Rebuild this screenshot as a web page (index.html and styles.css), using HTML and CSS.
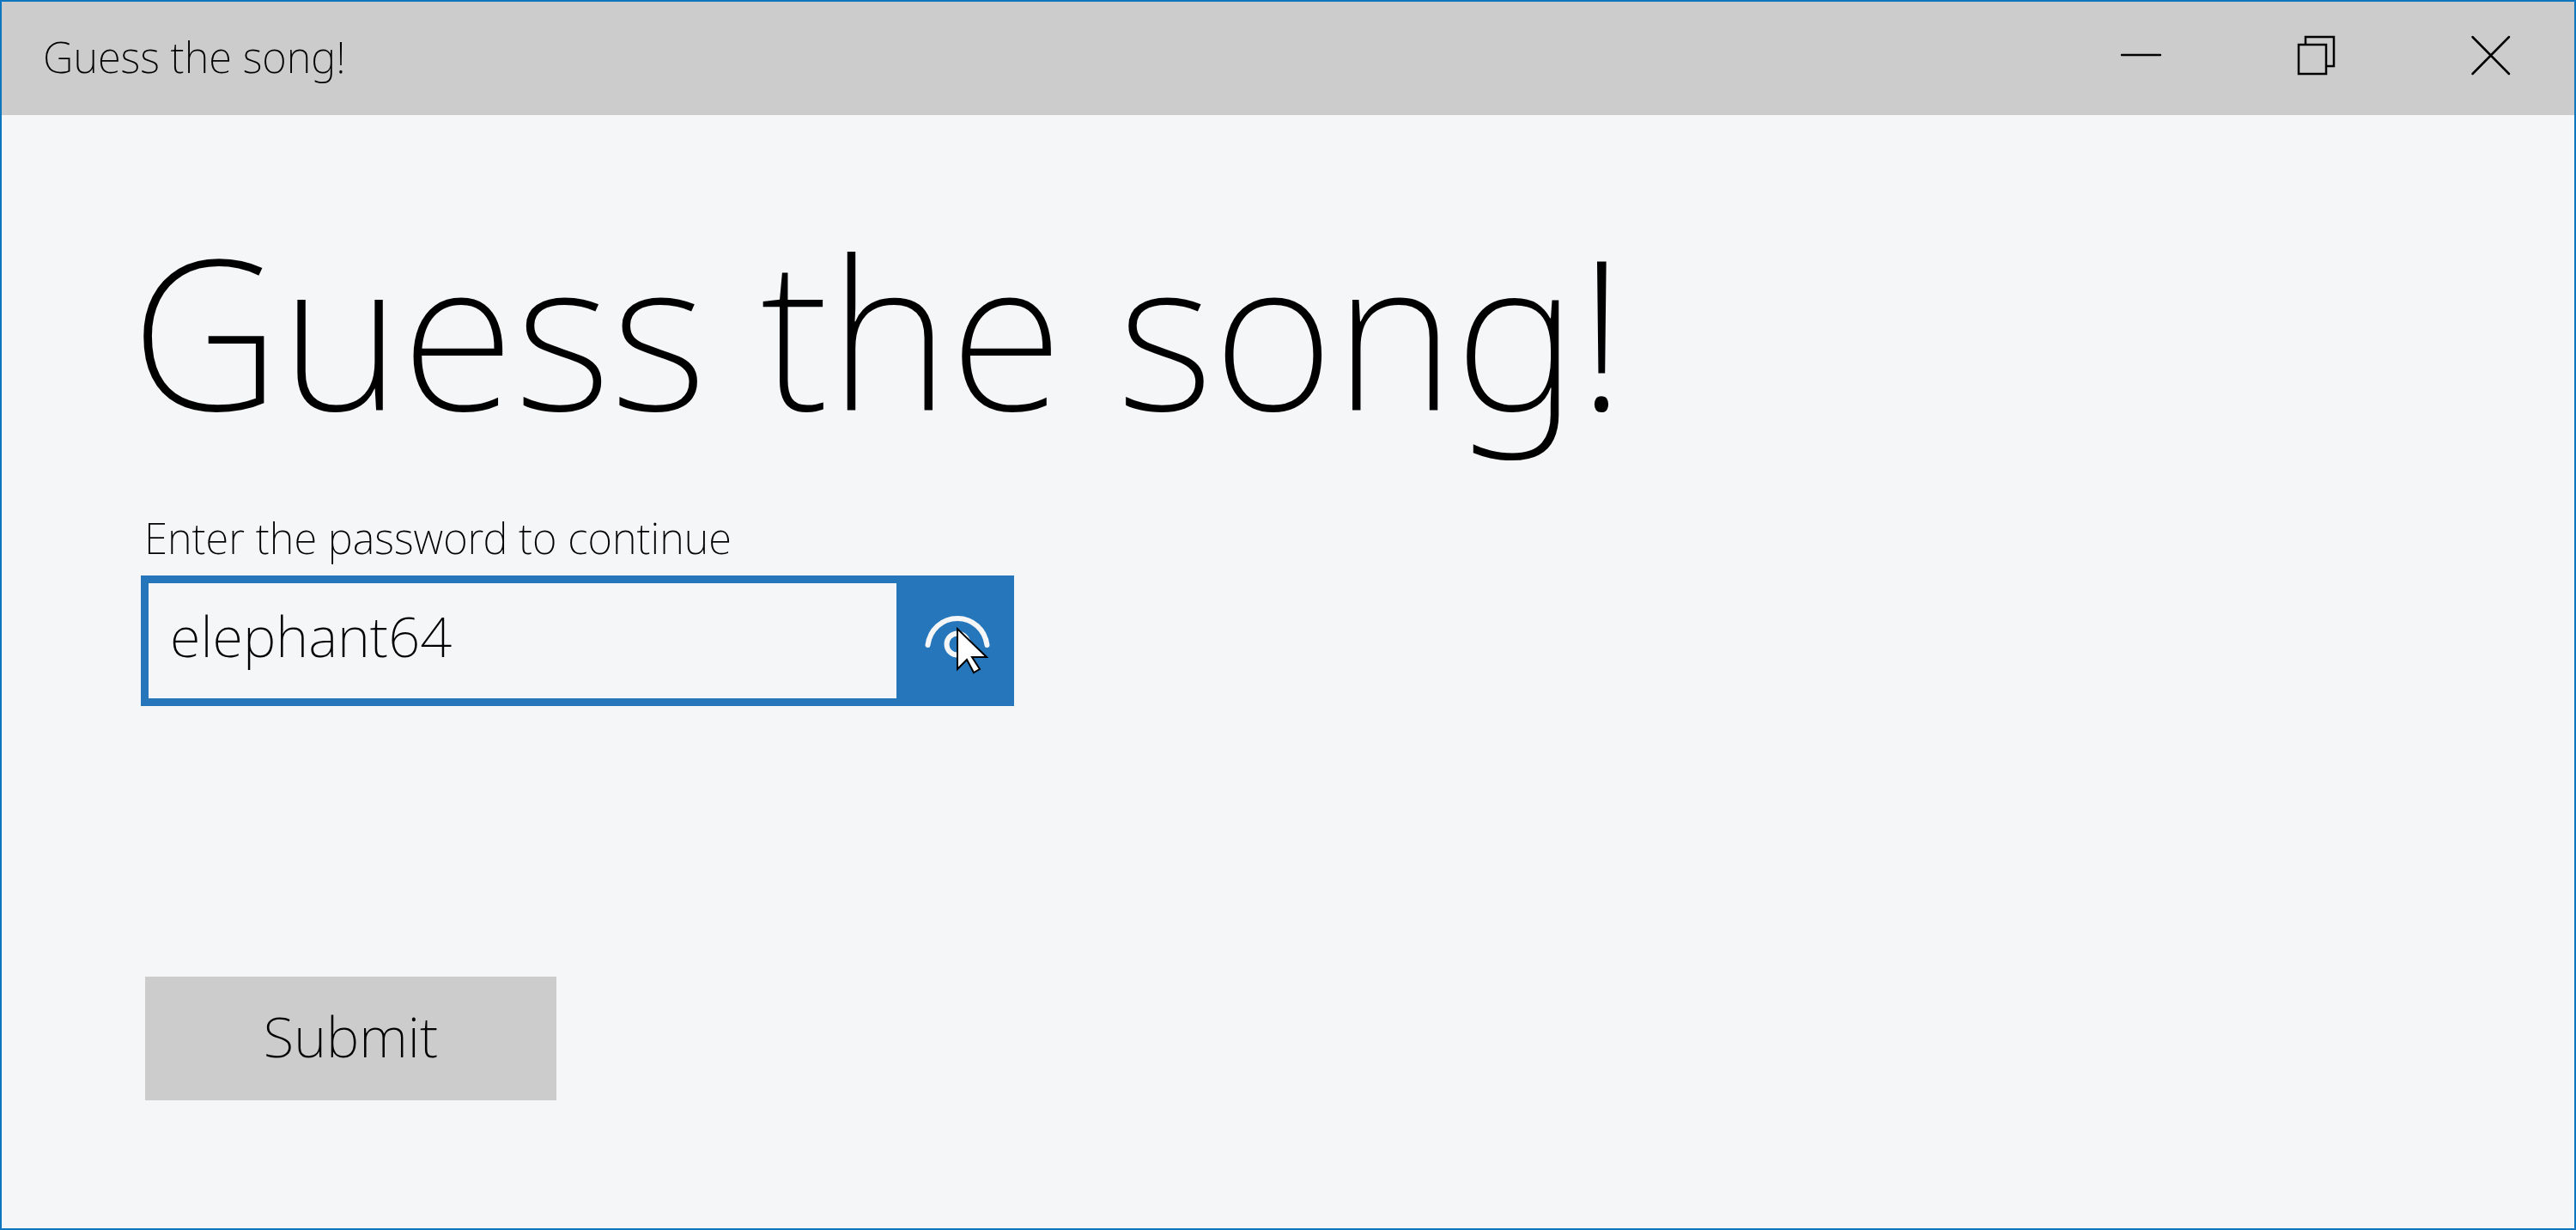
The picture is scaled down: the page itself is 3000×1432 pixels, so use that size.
FILE: index.html
```html
<!DOCTYPE html>
<html lang="en">
<head>
<meta charset="utf-8">
<title>Guess the song!</title>
<link rel="stylesheet" href="styles.css">
</head>
<body>
<div class="window">
  <header class="titlebar">
    <span class="caption">Guess the song!</span>
    <div class="window-controls">
      <button type="button" class="window-button" aria-label="Minimize">
        <svg class="window-icon" viewBox="0 0 48 48" stroke-width="2.5" aria-hidden="true"><path d="M2 24H47"/></svg>
      </button>
      <button type="button" class="window-button" aria-label="Restore">
        <svg class="window-icon" viewBox="0 0 48 48" stroke-width="2.5" aria-hidden="true"><path d="M4 12H36V46H4ZM12 12V3H45V37H36"/></svg>
      </button>
      <button type="button" class="window-button" aria-label="Close">
        <svg class="window-icon" viewBox="0 0 48 48" stroke-width="2.5" aria-hidden="true"><path d="M2.5 3L45 46M45 3L2.5 46"/></svg>
      </button>
    </div>
  </header>
  <main class="content">
    <h1 class="title">Guess the song!</h1>
    <form class="form">
      <label class="label" for="password">Enter the password to continue</label>
      <div class="field">
        <input class="input" id="password" type="text" value="elephant64" autocomplete="off" spellcheck="false">
        <button type="button" class="reveal" aria-label="Show password">
          <svg class="eye" viewBox="0 0 80 64" aria-hidden="true">
            <path d="M5.500 37C8 19 22 6 40 6S72 19 74.500 37"/>
            <circle cx="40" cy="36" r="12.500"/>
          </svg>
          <svg class="pointer" viewBox="0 0 40 60" aria-hidden="true">
            <path d="M1 3V50L12 39L20 54L27 50L18 36H35Z"/>
          </svg>
        </button>
      </div>
      <button type="submit" class="submit">Submit</button>
    </form>
  </main>
</div>
</body>
</html>
```
FILE: styles.css
```css
* {
  box-sizing: border-box;
}

body {
  margin: 0;
  color: #000;
  background: #f4f6f8;
  font-family: "Noto Sans", sans-serif;
  font-weight: 250;
}

button,
input {
  margin: 0;
  padding: 0;
  border: 0;
  border-radius: 0;
  color: inherit;
  font: inherit;
}

.window {
  min-height: 100vh;
  border: 2px solid #0f75bd;
}

.titlebar {
  display: flex;
  justify-content: space-between;
  height: 132px;
  padding-left: 48px;
  background: #ccc;
}

.caption {
  padding-bottom: 4px;
  font-size: 49px;
  line-height: 128px;
}

.window-controls {
  display: flex;
  gap: 10px;
}

.window-button {
  display: flex;
  align-items: center;
  justify-content: center;
  width: 194px;
  padding-bottom: 8px;
  background: none;
}

.window-icon {
  width: 48px;
  height: 48px;
  fill: none;
  stroke: #000;
  stroke-linecap: round;
}

.content {
  padding: 110px 150px 146px;
}

.title {
  margin: 0;
  font-size: 242px;
  font-weight: inherit;
  line-height: 280px;
}

.form {
  display: flex;
  flex-direction: column;
  align-items: flex-start;
  padding: 72px 0 0 12px;
}

.label {
  padding-left: 4px;
  font-size: 49px;
  line-height: 60px;
}

.field {
  display: flex;
  width: 1017px;
  max-width: 100%;
  height: 152px;
  margin-top: 14px;
  border: 9px solid #2676bb;
}

.input {
  flex: 1;
  min-width: 0;
  padding: 0 25px 12px;
  background: #f4f6f8;
  font-size: 65px;
  outline: none;
}

.reveal {
  position: relative;
  display: flex;
  align-items: center;
  justify-content: center;
  width: 128px;
  padding-left: 14px;
  background: #2676bb;
}

.eye {
  width: 80px;
  height: 64px;
  fill: none;
  stroke: #f4f6f8;
  stroke-width: 6;
  stroke-linecap: round;
}

.pointer {
  position: absolute;
  top: 50px;
  left: 70px;
  width: 40px;
  height: 60px;
  fill: #fff;
  stroke: #000;
  stroke-width: 2;
}

.submit {
  width: 479px;
  max-width: 100%;
  height: 144px;
  margin: 315px 0 0 5px;
  padding-bottom: 6px;
  background: #ccc;
  font-size: 65px;
}
```
